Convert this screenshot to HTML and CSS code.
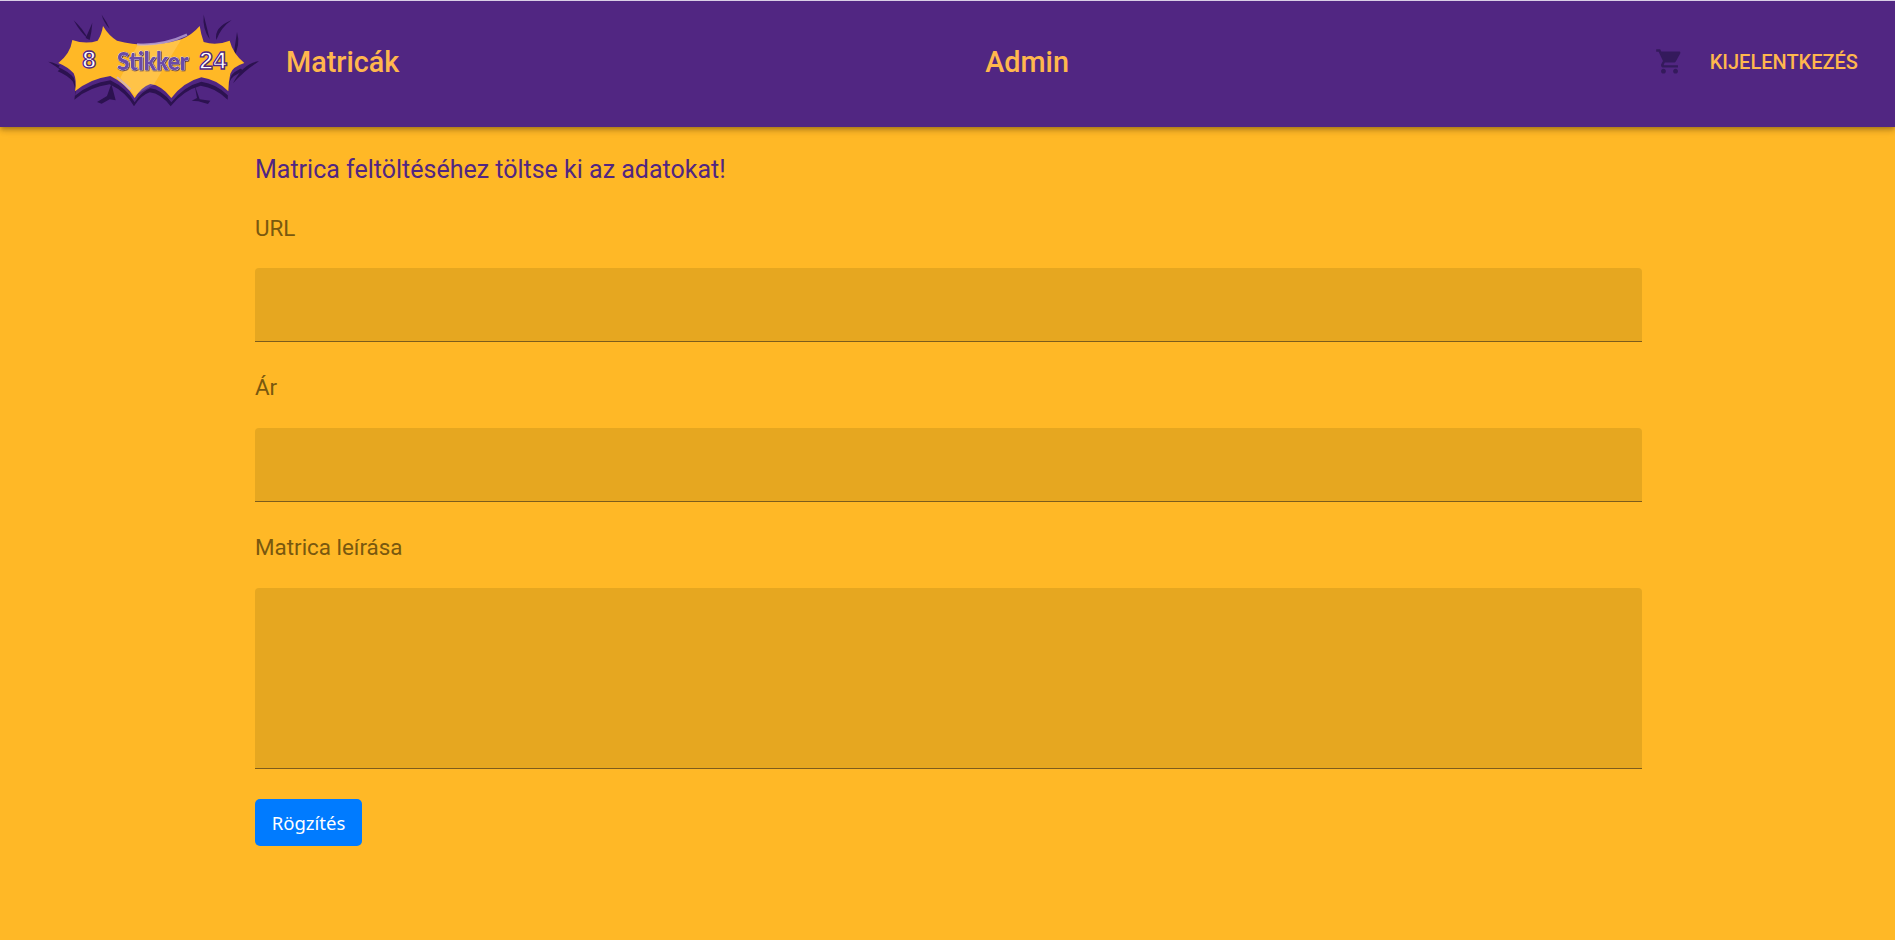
FILE: index.html
```html
<!DOCTYPE html>
<html lang="hu">
<head>
<meta charset="utf-8">
<title>Admin</title>
<link rel="stylesheet" href="styles.css">
</head>
<body>
<header class="topbar">
  <div class="brand">
    <svg class="logo" viewBox="145 36 636 288" aria-label="8 Stikker 24">
      <defs>
        <path id="burst" d="M176 183 Q212 155 218 114 Q258 128 294 116 Q306 98 310 72 Q328 102 352 116 Q450 142 545 112 Q578 98 600 72 Q604 98 612 120 Q650 132 690 116 Q700 155 734 183 Q698 195 692 215 Q686 240 686 268 Q650 232 605 226 Q552 240 515 288 Q486 250 452 246 Q425 255 405 288 Q380 245 332 222 Q272 230 226 268 Q232 235 222 214 Q205 195 176 183 Z"/>
      </defs>
      <g class="marks">
        <path d="M222 55 Q248 78 266 112 Q240 88 222 55 Z"/>
        <path d="M258 108 Q268 85 278 62 Q276 92 270 114 Z"/>
        <path d="M306 38 Q322 60 330 80 Q312 62 306 38 Z"/>
        <path d="M612 38 Q622 78 630 112 Q608 80 612 38 Z"/>
        <path d="M696 54 Q664 76 650 114 Q642 76 696 54 Z"/>
        <path d="M712 90 Q724 130 700 170 Q706 130 712 90 Z"/>
        <path d="M146 179 Q196 186 226 240 Q190 205 146 179 Z"/>
        <path d="M778 178 Q732 182 700 244 Q735 205 778 178 Z"/>
        <path d="M335 245 L348 295 L330 292 L306 305 L292 300 L322 282 Z"/>
        <path d="M585 250 L600 292 L632 296 L625 306 L596 298 L576 296 L592 288 Z"/>
      </g>
      <use class="burst-dark" href="#burst" x="-2" y="25"/>
      <use class="burst-mid" href="#burst" x="0" y="13"/>
      <use class="burst-fill" href="#burst"/>
      <path class="shine" d="M362 228 L412 132 L545 112 L462 248 L405 280 Z"/>
      <path class="shine-line" d="M412 127 Q490 132 562 98 M352 225 L392 262"/>
      <text class="logo-num" x="268" y="198" text-anchor="middle">8</text>
      <text class="logo-word" x="352" y="204" textLength="214" lengthAdjust="spacingAndGlyphs">Stikker</text>
      <text class="logo-num" x="640" y="201" text-anchor="middle">24</text>
    </svg>
    <a class="nav-title" href="#">Matricák</a>
  </div>
  <a class="nav-title" href="#">Admin</a>
  <div class="actions">
    <svg class="cart" viewBox="0 0 24 24"><path d="M7 18c-1.1 0-1.99.9-1.99 2S5.9 22 7 22s2-.9 2-2-.9-2-2-2zM1 2v2h2l3.6 7.59-1.35 2.45c-.16.28-.25.61-.25.96 0 1.1.9 2 2 2h12v-2H7.42c-.14 0-.25-.11-.25-.25l.03-.12.9-1.83h7.45c.75 0 1.41-.41 1.75-1.03l3.58-6.47c.08-.14.12-.31.12-.48 0-.55-.45-1-1-1H5.21l-.94-2H1zm16 16c-1.1 0-1.99.9-1.99 2s.89 2 1.99 2 2-.9 2-2-.9-2-2-2z"/></svg>
    <a class="logout" href="#">Kijelentkezés</a>
  </div>
</header>
<main class="content">
  <h1 class="heading">Matrica feltöltéséhez töltse ki az adatokat!</h1>
  <form class="upload">
    <label class="field">
      <span class="field-label">URL</span>
      <input class="control" type="text">
    </label>
    <label class="field">
      <span class="field-label">Ár</span>
      <input class="control" type="text">
    </label>
    <label class="field">
      <span class="field-label">Matrica leírása</span>
      <textarea class="control area"></textarea>
    </label>
    <button class="submit" type="button">Rögzítés</button>
  </form>
</main>
</body>
</html>
```
FILE: styles.css
```css
* { box-sizing: border-box; }
html, body { height: 100%; }
body {
  margin: 0;
  background: #ffb826;
  font-family: Roboto, sans-serif;
  overflow: hidden;
}
.topbar {
  height: 127px;
  border-top: 1px solid #d9cfe6;
  background: #512682;
  box-shadow: 0 2px 4px -1px rgba(0,0,0,.2), 0 4px 5px rgba(0,0,0,.14), 0 1px 10px rgba(0,0,0,.12);
  display: flex;
  align-items: center;
  justify-content: space-between;
  padding: 0 37px 5px 48px;
}
.brand { display: flex; align-items: center; gap: 26px; }
.logo { width: 212px; height: 96px; display: block; }
.marks { fill: #2c1250; }
.burst-dark { fill: #2c1250; }
.burst-mid { fill: #512682; }
.burst-fill { fill: #ffb826; }
.shine { fill: rgba(255,255,255,.16); }
.shine-line { fill: none; stroke: rgba(200,180,225,.7); stroke-width: 7; }
.logo-num {
  font-family: "Liberation Sans", sans-serif;
  font-size: 74px;
  font-weight: 700;
  fill: #fff;
  stroke: #512682;
  stroke-width: 4px;
}
.logo-word {
  font-family: "Lato", sans-serif;
  font-size: 72px;
  font-weight: 900;
  fill: #6a4aa8;
  stroke: #fff;
  stroke-width: 2px;
  paint-order: stroke;
  filter: drop-shadow(2px 2px 0 #2c1250);
}
.nav-title {
  color: #ffb74d;
  font-size: 28.8px;
  font-weight: 500;
  text-decoration: none;
}
.actions { display: flex; align-items: center; gap: 26px; }
.cart { width: 29px; height: 29px; fill: #341a5c; display: block; }
.logout {
  color: #ffb74d;
  font-size: 20px;
  font-weight: 500;
  text-transform: uppercase;
  text-decoration: none;
}
.content { padding: 28px 253px 0 255px; }
.heading {
  margin: 0;
  font-size: 25px;
  font-weight: 400;
  line-height: 30px;
  color: #512682;
}
.upload { display: flex; flex-direction: column; }
.field { display: flex; flex-direction: column; }
.field-label {
  margin-top: 28px;
  font-size: 22.4px;
  line-height: 30px;
  height: 55px;
  color: #79580f;
}
.field + .field .field-label { margin-top: 30px; height: 56px; }
.control {
  display: block;
  width: 100%;
  height: 74px;
  border: 0;
  border-bottom: 1px solid #7d5c1c;
  border-radius: 4px 4px 0 0;
  background: #e6a720;
  outline: none;
  resize: none;
}
.area { height: 181px; }
.submit {
  align-self: flex-start;
  margin-top: 30px;
  width: 107px;
  height: 47px;
  border: 0;
  border-radius: 5px;
  background: #007bff;
  color: #fff;
  font-family: "Noto Sans", sans-serif;
  font-size: 18.5px;
}
```
